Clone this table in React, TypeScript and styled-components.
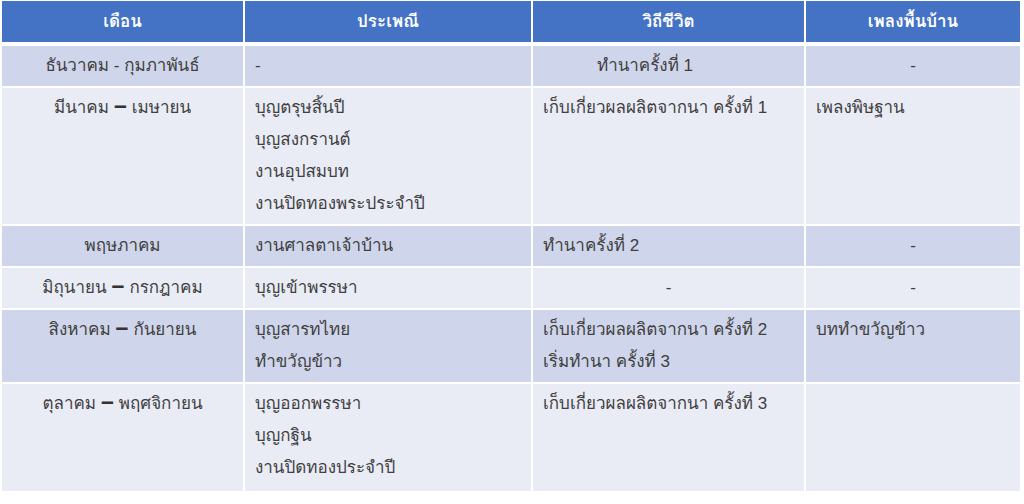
import React from 'react';
import styled, {createGlobalStyle} from 'styled-components';

const GlobalStyle = createGlobalStyle`
  html, body {
    margin: 0;
    padding: 0;
    background: #ffffff;
  }
  body {
    font-family: "Liberation Sans", Loma, "Noto Sans Thai Looped", sans-serif;
  }
`;

type Align = 'left' | 'center';

interface CellProps {
  $align?: Align;
  $shade: 'odd' | 'even';
  $shift?: number;
}

interface RowData {
  month: [string, string?];
  tradition: string[];
  life: string[];
  lifeAlign?: Align;
  lifeShift?: number;
  song: string[];
  songAlign?: Align;
}

const ROWS: RowData[] = [
  {
    month: ['ธันวาคม - กุมภาพันธ์'],
    tradition: ['-'],
    life: ['ทำนาครั้งที่ 1'],
    lifeAlign: 'center',
    lifeShift: 57,
    song: ['-'],
    songAlign: 'center'
  },
  {
    month: ['มีนาคม', 'เมษายน'],
    tradition: ['บุญตรุษสิ้นปี', 'บุญสงกรานต์', 'งานอุปสมบท', 'งานปิดทองพระประจำปี'],
    life: ['เก็บเกี่ยวผลผลิตจากนา ครั้งที่ 1'],
    song: ['เพลงพิษฐาน']
  },
  {
    month: ['พฤษภาคม'],
    tradition: ['งานศาลตาเจ้าบ้าน'],
    life: ['ทำนาครั้งที่ 2'],
    song: ['-'],
    songAlign: 'center'
  },
  {
    month: ['มิถุนายน', 'กรกฎาคม'],
    tradition: ['บุญเข้าพรรษา'],
    life: ['-'],
    lifeAlign: 'center',
    song: ['-'],
    songAlign: 'center'
  },
  {
    month: ['สิงหาคม', 'กันยายน'],
    tradition: ['บุญสารทไทย', 'ทำขวัญข้าว'],
    life: ['เก็บเกี่ยวผลผลิตจากนา ครั้งที่ 2', 'เริ่มทำนา ครั้งที่ 3'],
    song: ['บททำขวัญข้าว']
  },
  {
    month: ['ตุลาคม', 'พฤศจิกายน'],
    tradition: ['บุญออกพรรษา', 'บุญกฐิน', 'งานปิดทองประจำปี'],
    life: ['เก็บเกี่ยวผลผลิตจากนา ครั้งที่ 3'],
    song: []
  }
];

const HEADERS = ['เดือน', 'ประเพณี', 'วิถีชีวิต', 'เพลงพื้นบ้าน'];

const Page = styled.div`
  padding: 1px 4px 0 2px;
`;

const Table = styled.div`
  display: grid;
  grid-template-columns: 241px 286px 271px 214px;
  column-gap: 2px;
  row-gap: 2px;
`;

const HeadCell = styled.div`
  background: #4472c4;
  color: #ffffff;
  font-size: 17px;
  font-weight: 700;
  text-align: center;
  height: 41px;
  line-height: 41px;
  margin-bottom: 2px;
`;

const Cell = styled.div<CellProps>`
  background: ${p => (p.$shade === 'odd' ? '#cfd5ea' : '#e9ebf5')};
  color: #404040;
  font-size: 17px;
  line-height: 32px;
  padding: 4px ${p => (p.$shift ? p.$shift : 10)}px 4px 10px;
  text-align: ${p => p.$align || 'left'};

  &:last-child,
  &:nth-last-child(2),
  &:nth-last-child(3),
  &:nth-last-child(4) {
    padding-bottom: 7px;
  }
`;

const Line = styled.div`
  white-space: nowrap;
`;

const Dash = styled.span`
  font-size: 23px;
  line-height: 0;
  font-weight: 700;
  margin: 0 5px;
  color: #333333;
`;

const App = () => {
  return (
    <>
      <GlobalStyle />
      <Page>
        <Table>
          {HEADERS.map(h => (
            <HeadCell key={h}>{h}</HeadCell>
          ))}
          {ROWS.map((row, i) => {
            const shade = i % 2 === 0 ? 'odd' : 'even';
            const [from, to] = row.month;
            return (
              <React.Fragment key={from}>
                <Cell $shade={shade} $align="center">
                  <Line>
                    {from}
                    {to && (
                      <>
                        <Dash>–</Dash>
                        {to}
                      </>
                    )}
                  </Line>
                </Cell>
                <Cell $shade={shade}>
                  {row.tradition.map(t => (
                    <Line key={t}>{t}</Line>
                  ))}
                </Cell>
                <Cell $shade={shade} $align={row.lifeAlign} $shift={row.lifeShift}>
                  {row.life.map(t => (
                    <Line key={t}>{t}</Line>
                  ))}
                </Cell>
                <Cell $shade={shade} $align={row.songAlign}>
                  {row.song.map(t => (
                    <Line key={t}>{t}</Line>
                  ))}
                </Cell>
              </React.Fragment>
            );
          })}
        </Table>
      </Page>
    </>
  );
};

export default App;
